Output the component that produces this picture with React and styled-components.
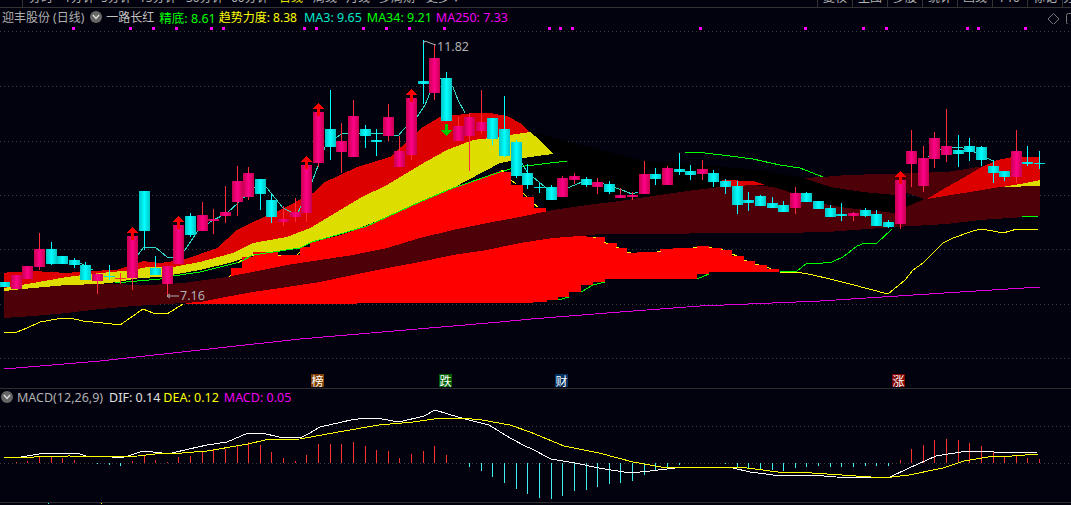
import React from 'react';
import styled, { createGlobalStyle } from 'styled-components';

const FONT = '"Noto Sans", "Noto Sans CJK SC", sans-serif';

const GlobalStyle = createGlobalStyle`
    html, body {
        margin: 0;
        padding: 0;
        background: #02020e;
    }
`;

// [bodyTop, bodyBottom, wickTop, wickBottom, colour, mark]
const P = 'p';
const C = 'c';
const candles = [
    [282, 287, 282, 287, C], [275, 289, 275, 289, P], [266, 279, 266, 279, P], [249, 267, 233, 270, P],
    [249, 264, 242, 265, C], [256, 264, 256, 264, C], [260, 265, 258, 268, C], [265, 280, 262, 280, C],
    [274, 281, 273, 294, P], [276, 277, 265, 280, C], [278, 279, 273, 284, 'x'], [236, 278, 236, 290, P, 'up'],
    [191, 231, 191, 250, C], [268, 275, 256, 275, C], [266, 284, 266, 296, P], [225, 264, 225, 264, P, 'up'],
    [216, 235, 213, 237, C], [215, 231, 202, 231, P], [219, 221, 209, 234, P], [212, 216, 186, 223, P],
    [181, 202, 166, 216, P], [173, 197, 167, 200, P], [179, 194, 179, 210, C], [200, 217, 194, 223, C],
    [219, 222, 206, 226, P], [212, 217, 198, 222, P], [165, 213, 165, 222, P, 'up'], [112, 163, 112, 167, P, 'up'],
    [129, 147, 90, 160, C], [141, 152, 123, 173, P], [116, 157, 100, 157, P], [129, 136, 125, 148, C],
    [140, 142, 129, 156, C], [117, 136, 104, 141, P], [151, 167, 136, 167, P], [98, 155, 98, 160, P, 'up'],
    [81, 84, 40, 104, C], [58, 93, 45, 100, P], [78, 121, 72, 121, C, 'down'], [126, 141, 117, 141, P],
    [117, 136, 113, 171, P], [122, 131, 90, 134, P], [118, 139, 118, 145, C], [129, 156, 96, 157, C],
    [142, 176, 140, 178, C], [173, 185, 164, 189, C], [187, 188, 183, 193, C], [187, 200, 185, 200, C],
    [178, 197, 176, 197, P], [176, 180, 173, 184, P], [179, 185, 177, 187, C], [182, 187, 178, 194, P],
    [184, 192, 181, 194, C], [195, 198, 188, 198, P], [195, 197, 192, 200, P], [174, 194, 161, 194, P],
    [174, 179, 168, 185, C], [168, 185, 166, 185, P], [169, 172, 153, 175, C], [171, 175, 165, 180, C],
    [169, 174, 160, 180, P], [173, 182, 170, 187, C], [181, 187, 179, 194, C], [186, 205, 181, 214, C],
    [200, 203, 192, 211, C], [196, 206, 195, 206, C], [203, 208, 197, 208, C], [205, 212, 201, 212, C],
    [193, 208, 187, 214, P], [193, 202, 192, 202, C], [201, 209, 201, 209, C], [208, 217, 205, 217, C],
    [214, 216, 203, 221, C], [213, 216, 212, 221, P], [210, 216, 208, 217, C], [214, 226, 210, 226, C],
    [222, 227, 220, 228, C], [180, 224, 180, 229, P, 'up'], [151, 164, 130, 187, P], [158, 186, 146, 192, P],
    [138, 159, 132, 168, P], [146, 155, 109, 162, P], [150, 154, 135, 167, C], [146, 152, 138, 161, C],
    [147, 160, 146, 166, C], [166, 173, 160, 183, C], [171, 177, 171, 181, C], [151, 177, 130, 183, P],
    [162, 164, 146, 166, C], [163, 164, 151, 169, C],
];

const candleX = (i) => 4 + 11.63 * i;

const periods = [
    ['分时', 35], ['1分钟', 37], ['5分钟', 38], ['15分钟', 47], ['30分钟', 45], ['60分钟', 48],
    ['日线', 34], ['周线', 33], ['月线', 33], ['多周期', 47], ['更多 ▾', 40],
];
const tools = ['复权', '主图', '多股', '统计', '画线', 'F10', '标记', '分'];

const signalX = [74, 131, 154, 177, 212, 224, 305, 317, 364, 387, 410, 445, 550, 561, 573, 701, 806, 864, 887, 968, 979, 1026];
const gridY = [31, 86, 141, 195, 249, 304, 358];

const pts = (list) => list.map((p) => p.join(',')).join(' ');

// horizontal then vertical, like the staircase the terminal draws
const stairs = (list) => {
    const out = [];
    list.forEach((p, i) => {
        out.push(p);
        if (i < list.length - 1) out.push([list[i + 1][0], p[1]]);
    });
    return out;
};

const redTop = [
    [4, 273], [10, 272], [33, 271], [67, 273], [87, 271], [117, 270], [143, 261], [160, 263], [183, 260], [217, 248],
    [237, 230], [253, 222], [280, 210], [313, 193], [323, 183], [357, 167], [390, 157], [423, 127], [440, 117],
    [473, 113], [490, 113], [507, 116], [520, 123], [530, 132],
];
const yellowTop = [
    [4, 288], [33, 283], [67, 277], [100, 273], [133, 270], [147, 267], [173, 267], [200, 262], [233, 253], [253, 243],
    [287, 237], [310, 228], [337, 212], [360, 198], [387, 185], [420, 165], [447, 150], [473, 140], [490, 138], [530, 132],
];
const yellowBottom = [
    [4, 292], [33, 289], [67, 286], [100, 284], [117, 282], [140, 278], [160, 277], [183, 273], [200, 270], [233, 262],
    [253, 255], [300, 248], [312, 242], [337, 235], [367, 225], [387, 217], [420, 202], [453, 188], [500, 163],
    [530, 157], [553, 154], [540, 140],
];
const bigRedTop = [
    [184, 304], [231, 292], [231, 268], [242, 268], [242, 257], [253, 257], [253, 252], [278, 252], [278, 255], [300, 255],
    [300, 247], [310, 247], [310, 243], [337, 236], [367, 226], [387, 217], [420, 202], [453, 188], [500, 171], [500, 172],
    [511, 172], [511, 185], [523, 185], [523, 197], [534, 197], [534, 208], [546, 208], [546, 222], [580, 236],
    ...stairs([[593, 237], [605, 243], [617, 248], [627, 253], [637, 252], [660, 249], [673, 248], [697, 246], [709, 248],
        [722, 250], [732, 256], [744, 261], [755, 265], [767, 269], [779, 272]]),
];
const bigRedBottom = [
    ...stairs([[723, 272], [709, 274], [697, 279], [605, 282], [593, 285], [581, 292], [569, 297], [558, 300], [547, 302], [533, 303]]),
    [184, 304],
];
const maroonTop = [
    [4, 291], [33, 288], [67, 285], [100, 284], [150, 285], [183, 283], [220, 278], [253, 272], [287, 265], [320, 260],
    [353, 255], [387, 248], [420, 238], [453, 230], [487, 223], [520, 217], [553, 210], [587, 205], [620, 201], [653, 196],
    [687, 191], [720, 187], [753, 185], [773, 187], [787, 191], [813, 202], [847, 208], [895, 213], [906, 207], [927, 198],
    [963, 192], [997, 187], [1040, 186],
];
const maroonBottom = [
    [1040, 216], [980, 220], [947, 224], [895, 227], [827, 232], [780, 233], [600, 234], [580, 236], [553, 238], [520, 243],
    [487, 250], [453, 255], [420, 262], [387, 268], [353, 275], [320, 282], [287, 287], [253, 292], [220, 298], [200, 302],
    [167, 304], [133, 306], [100, 309], [67, 313], [33, 316], [4, 318],
];
const upperCloud = [
    [803, 178], [823, 177], [847, 175], [880, 174], [947, 172], [985, 166], [1000, 190], [927, 200], [906, 193], [895, 195],
    [863, 192], [830, 187],
];
const rightRed = [
    [927, 199], [947, 187], [963, 178], [980, 168], [997, 160], [1013, 157], [1040, 157], [1040, 186], [1000, 187],
];
const rightYellow = [[1002, 187], [1020, 184], [1040, 180], [1040, 186]];
const redSliver = [[722, 180], [753, 181], [765, 185], [753, 185], [722, 187]];
const blackCloud = [
    [530, 132], [640, 160], [760, 170], [803, 178], [895, 195], [927, 199], [895, 213], [847, 208], [813, 202], [780, 191],
    [720, 187], [653, 196], [587, 205], [550, 210], [546, 208], [500, 163],
];

const greenLines = [
    [[115, 283], [160, 279], [173, 276], [200, 272], [240, 262], [253, 255], [300, 248], [312, 242], [337, 235], [367, 226],
        [387, 217], [420, 202], [453, 188], [500, 172], [517, 167], [567, 161]],
    [[685, 152], [705, 153], [730, 156], [753, 159], [780, 165], [800, 168], [823, 177]],
    [[780, 272], [797, 271], [807, 263], [823, 263], [832, 262], [843, 257], [857, 246], [865, 243], [877, 243], [892, 229]],
    [[1022, 216], [1038, 216]],
    [[558, 300], [569, 297]], [[581, 292], [593, 285], [605, 282]], [[697, 279], [709, 274]],
];
const yellowLines = [
    [[4, 333], [17, 332], [27, 328], [40, 322], [57, 319], [70, 318], [83, 321], [103, 323], [120, 325], [143, 309], [153, 313],
        [167, 314], [183, 304]],
    [[229, 277], [231, 275]], [[238, 263], [242, 260]], [[252, 255], [254, 256]], [[278, 255], [281, 255]], [[297, 255], [300, 252]],
    [[501, 170], [504, 172]], [[511, 180], [516, 184]], [[523, 193], [527, 197]], [[534, 204], [538, 207]],
    [[593, 237], [596, 238]], [[604, 242], [608, 244]], [[616, 247], [619, 248]], [[627, 252], [631, 253]], [[657, 251], [661, 251]],
    [[693, 247], [697, 247]], [[709, 247], [712, 248]], [[721, 249], [723, 250]], [[732, 254], [737, 256]], [[744, 260], [747, 261]],
    [[755, 264], [759, 265]], [[767, 267], [771, 269]],
    [[780, 273], [797, 272], [813, 275], [830, 279], [850, 284], [888, 294], [905, 280], [913, 270], [923, 263], [943, 243], [953, 238],
        [970, 232], [980, 229], [993, 231], [1003, 233], [1017, 229], [1038, 229]],
];
const tealLines = [
    [[138, 255], [143, 248], [155, 247], [167, 257], [173, 257], [185, 250], [197, 232], [210, 222], [227, 213], [238, 203], [255, 187],
        [267, 188], [283, 208], [297, 215], [312, 182], [325, 147], [337, 137], [343, 133], [358, 133], [383, 134], [398, 136], [403, 130],
        [417, 117], [425, 105], [430, 93], [440, 78], [453, 87], [458, 100], [465, 113]],
    [[522, 163], [527, 172], [545, 187], [570, 187], [582, 182], [598, 182], [607, 185], [622, 190], [632, 194], [638, 192]],
    [[928, 157], [940, 150], [953, 147], [963, 148], [977, 153], [987, 158], [993, 161]],
    [[80, 263], [93, 270]],
];

const difLine = [
    [4, 458], [21, 457], [45, 453], [77, 453], [86, 456], [103, 456], [121, 458], [131, 455], [143, 451], [162, 453], [172, 453], [189, 449],
    [207, 445], [227, 442], [248, 433], [262, 433], [279, 437], [300, 438], [310, 433], [320, 427], [351, 420], [365, 418], [382, 419],
    [399, 422], [424, 416], [435, 410], [448, 414], [465, 419], [489, 425], [510, 438], [527, 447], [530, 448], [551, 459], [575, 463],
    [599, 468], [630, 473], [650, 471], [675, 468], [702, 467], [733, 468], [750, 472], [781, 476], [812, 475], [836, 477], [888, 478],
    [909, 468], [936, 456], [967, 451], [985, 451], [1002, 453], [1038, 452],
];
const deaLine = [
    [4, 458], [34, 457], [69, 456], [103, 457], [138, 456], [155, 454], [182, 453], [207, 451], [248, 444], [265, 440], [300, 439], [344, 431],
    [379, 425], [413, 422], [441, 418], [461, 418], [482, 420], [510, 425], [530, 432], [564, 446], [599, 453], [633, 462], [661, 467],
    [719, 467], [747, 468], [778, 472], [812, 473], [871, 477], [892, 477], [909, 475], [943, 468], [964, 461], [988, 457], [1012, 456], [1038, 454],
];
const macdBars = {
    1: 1, 2: 2, 3: 6, 4: 6, 5: 5, 6: 3, 8: -1, 9: -2, 10: -3, 11: 2, 12: 8, 13: 3, 14: 1, 15: 6, 16: 7, 17: 11, 18: 13, 19: 14, 20: 18,
    21: 21, 22: 18, 23: 11, 24: 5, 25: 2, 26: 8, 27: 19, 28: 19, 29: 19, 30: 21, 31: 17, 32: 13, 33: 12, 34: 5, 35: 9, 36: 12, 37: 17,
    38: 8, 40: -4, 41: -8, 42: -14, 43: -20, 44: -26, 45: -31, 46: -35, 47: -36, 48: -33, 49: -28, 50: -27, 51: -24, 52: -21, 53: -20,
    54: -18, 55: -12, 56: -8, 57: -4, 58: -2, 62: -1, 63: -4, 64: -5, 65: -7, 66: -7, 67: -8, 68: -5, 69: -4, 70: -3, 71: -4, 72: -4,
    73: -4, 74: -3, 75: -3, 76: -3, 77: 3, 78: 14, 79: 18, 80: 23, 81: 24, 82: 23, 83: 20, 84: 17, 85: 11, 86: 7, 87: 8, 88: 5, 89: 4,
};

const Page = styled.div`
    width: 1071px;
    height: 505px;
    overflow: hidden;
    display: flex;
    flex-direction: column;
    background: #02020e;
    font-family: ${FONT};
`;

const TopBar = styled.div`
    height: 7px;
    flex: none;
    display: flex;
    overflow: hidden;
    border-bottom: 1px solid #333;
`;

const PeriodTabs = styled.div`
    margin-left: 22px;
    padding-left: 6px;
    display: flex;
    border-left: 1px solid #333;
`;

const PeriodTab = styled.div`
    width: ${(p) => p.$w}px;
    flex: none;
    font-size: 12px;
    line-height: 14px;
    margin-top: -9px;
    white-space: nowrap;
    color: ${(p) => (p.$active ? '#e8e000' : '#b4b4b4')};
`;

const ToolButtons = styled.div`
    margin-left: auto;
    display: flex;
`;

const ToolButton = styled.div`
    width: ${(p) => p.$w}px;
    box-sizing: border-box;
    flex: none;
    overflow: hidden;
    border-left: 1px solid #333;
    text-align: center;
    font-size: 12px;
    line-height: 14px;
    color: #b4b4b4;
    > span {
        display: block;
        margin-top: -9px;
    }
`;

const Legend = styled.div`
    height: ${(p) => p.$h}px;
    flex: none;
    display: flex;
    align-items: center;
    font-size: 12.5px;
    white-space: nowrap;
    position: relative;
`;

const LegendItem = styled.span`
    color: ${(p) => p.$color};
    margin-left: ${(p) => p.$gap}px;
    font-size: ${(p) => p.$size || 12.5}px;
`;

const CollapseDot = styled.span`
    width: 12px;
    height: 12px;
    flex: none;
    margin-left: ${(p) => p.$gap}px;
    border-radius: 50%;
    background: #666;
    display: flex;
    align-items: center;
    justify-content: center;
`;

const CornerIcons = styled.div`
    position: absolute;
    right: 0;
    top: 4px;
    width: 23px;
    height: 12px;
    overflow: hidden;
`;

const ChartPane = styled.div`
    position: relative;
    height: 362px;
    flex: none;
`;

const ChartSvg = styled.svg`
    display: block;
    width: 1071px;
    height: ${(p) => p.$h}px;
`;

const PriceTag = styled.span`
    position: absolute;
    left: ${(p) => p.$x}px;
    top: ${(p) => p.$y}px;
    font-size: 12.5px;
    line-height: 14px;
    color: #b0b0b0;
`;

const EventBadge = styled.span`
    position: absolute;
    left: ${(p) => p.$x}px;
    top: 348px;
    width: 13px;
    height: 13px;
    background: ${(p) => p.$bg};
    color: #fff;
    font-family: "Noto Sans CJK SC", sans-serif;
    font-size: 12px;
    line-height: 13px;
    text-align: center;
`;

const MacdPane = styled.div`
    height: 113px;
    flex: none;
    border-top: 1px solid #2e2e2e;
    border-bottom: 1px solid #2e2e2e;
`;

const Footer = styled.div`
    height: 2px;
    flex: none;
    display: flex;
`;

const FooterTick = styled.span`
    width: 1px;
    height: 1px;
    margin-left: ${(p) => p.$gap}px;
    background: ${(p) => p.$color};
`;

const Chevron = () => (
    <svg width="8" height="6" viewBox="0 0 8 6">
        <path d="M1 1 L4 4.5 L7 1" fill="none" stroke="#ddd" strokeWidth="1.4" />
    </svg>
);

const Lines = ({ lines, color }) => lines.map((line, i) => (
    <polyline key={i} points={pts(line)} fill="none" stroke={color} strokeWidth="1" shapeRendering="crispEdges" />
));

const Candle = ({ c, i }) => {
    const [top, bottom, wickTop, wickBottom, kind, mark] = c;
    const x = candleX(i);
    const cx = Math.round(x);
    const wick = kind === C ? '#00ffff' : '#ff2a3a';
    return (
        <g shapeRendering="crispEdges">
            <rect x={cx} y={wickTop} width="1.2" height={wickBottom - wickTop} fill={wick} />
            {kind === 'x' ? (
                <rect x={cx - 5} y={top} width="11" height="1" fill={wick} />
            ) : (
                <rect x={cx - 5} y={top} width="11" height={Math.max(bottom - top, 1)} fill={`url(#${kind === C ? 'cyanBody' : 'pinkBody'})`} />
            )}
            {mark === 'up' && (
                <path d={`M${cx - 5} ${top - 3} L${cx + 0.5} ${top - 9} L${cx + 6} ${top - 3} L${cx + 2} ${top - 3} L${cx + 2} ${top + 4} L${cx - 1} ${top + 4} L${cx - 1} ${top - 3} Z`} fill="#ff0000" />
            )}
            {mark === 'down' && (
                <path d={`M${cx - 5} ${bottom + 9} L${cx + 0.5} ${bottom + 15} L${cx + 6} ${bottom + 9} L${cx + 2} ${bottom + 9} L${cx + 2} ${bottom + 3} L${cx - 1} ${bottom + 3} L${cx - 1} ${bottom + 9} Z`} fill="#00c800" />
            )}
        </g>
    );
};

const MainChart = () => (
    <ChartSvg $h={362} viewBox="0 26 1071 362">
        <defs>
            <linearGradient id="pinkBody">
                <stop offset="0" stopColor="#c80050" />
                <stop offset="0.5" stopColor="#ff0088" />
                <stop offset="1" stopColor="#c80050" />
            </linearGradient>
            <linearGradient id="cyanBody">
                <stop offset="0" stopColor="#00c4c4" />
                <stop offset="0.5" stopColor="#00ffff" />
                <stop offset="1" stopColor="#00c4c4" />
            </linearGradient>
        </defs>
        {gridY.map((y) => (
            <line key={y} x1="0" x2="1071" y1={y + 0.5} y2={y + 0.5} stroke="#3c3c3c" strokeDasharray="1 3" />
        ))}
        {signalX.map((x) => (
            <rect key={x} x={x - 2} y="27" width="3" height="3" fill="#ff00ff" />
        ))}
        <polyline points={pts([[4, 369], [100, 361], [300, 339], [500, 322], [531, 319], [620, 312], [700, 306], [820, 301], [960, 292], [1040, 287]])} fill="none" stroke="#e000e0" shapeRendering="crispEdges" />
        <g shapeRendering="crispEdges">
            <polygon points={pts(blackCloud)} fill="#000" />
            <polygon points={pts([...redTop, ...[...yellowTop].reverse()])} fill="#dd0000" />
            <polygon points={pts([...yellowTop, ...[...yellowBottom].reverse()])} fill="#dddd00" />
            <polygon points={pts([...bigRedTop, ...bigRedBottom])} fill="#ff0000" />
            <polygon points={pts([...maroonTop, ...maroonBottom])} fill="#4e0008" />
            <polygon points={pts(upperCloud)} fill="#4e0008" />
            <polygon points={pts(redSliver)} fill="#dd0000" />
            <polygon points={pts(rightRed)} fill="#dd0000" />
            <polygon points={pts(rightYellow)} fill="#dddd00" />
        </g>
        <Lines lines={greenLines} color="#00ff00" />
        <Lines lines={yellowLines} color="#ffff00" />
        <Lines lines={tealLines} color="#30d8c8" />
        {candles.map((c, i) => <Candle key={i} c={c} i={i} />)}
        <polyline points="423,44 425,41 430,43 436,45" fill="none" stroke="#b0b0b0" />
        <path d="M167 296 H179 M167 296 L170 294 M167 296 L170 298" fill="none" stroke="#b0b0b0" />
    </ChartSvg>
);

const MacdChart = () => (
    <ChartSvg $h={97} viewBox="0 405 1071 97">
        <line x1="0" x2="1071" y1="426.5" y2="426.5" stroke="#3c3c3c" strokeDasharray="1 3" />
        <line x1="0" x2="1071" y1="463.5" y2="463.5" stroke="#3c3c3c" strokeDasharray="1 3" />
        <g shapeRendering="crispEdges">
            {Object.entries(macdBars).map(([i, v]) => {
                const x = Math.round(candleX(Number(i)));
                return <rect key={i} x={x} y={v > 0 ? 463 - v : 463} width="1" height={Math.abs(v)} fill={v > 0 ? '#ff3030' : '#40f0f0'} />;
            })}
        </g>
        <Lines lines={[difLine]} color="#ffffff" />
        <Lines lines={[deaLine]} color="#ffff00" />
    </ChartSvg>
);

const App = () => (
    <>
        <GlobalStyle />
        <Page>
            <TopBar>
                <PeriodTabs>
                    {periods.map(([label, w]) => (
                        <PeriodTab key={label} $w={w} $active={label === '日线'}>{label}</PeriodTab>
                    ))}
                </PeriodTabs>
                <ToolButtons>
                    {tools.map((label, i) => (
                        <ToolButton key={label} $w={i === 7 ? 9 : 35}><span>{label}</span></ToolButton>
                    ))}
                </ToolButtons>
            </TopBar>
            <Legend $h={18}>
                <LegendItem $gap={2} $size={12} $color="#b0b0b0">迎丰股份 (日线)</LegendItem>
                <CollapseDot $gap={6}><Chevron /></CollapseDot>
                <LegendItem $gap={4} $size={12} $color="#c0c0c0">一路长红</LegendItem>
                <LegendItem $gap={5} $color="#00ff00">精底: 8.61</LegendItem>
                <LegendItem $gap={3} $size={12} $color="#ffff00">趋势力度: 8.38</LegendItem>
                <LegendItem $gap={7} $color="#00e8c8">MA3: 9.65</LegendItem>
                <LegendItem $gap={5} $color="#00ff00">MA34: 9.21</LegendItem>
                <LegendItem $gap={4} $color="#f000f0">MA250: 7.33</LegendItem>
                <CornerIcons>
                    <svg width="23" height="12" viewBox="0 0 23 12">
                        <path d="M5.5 0.5 L11 6 L5.5 11.5 L0 6 Z" fill="none" stroke="#777" />
                        <rect x="18.5" y="0.5" width="10" height="11" rx="2" fill="none" stroke="#777" />
                    </svg>
                </CornerIcons>
            </Legend>
            <ChartPane>
                <MainChart />
                <PriceTag $x={437} $y={14}>11.82</PriceTag>
                <PriceTag $x={180} $y={263}>7.16</PriceTag>
                <EventBadge $x={311} $bg="#804000">榜</EventBadge>
                <EventBadge $x={439} $bg="#006000">跌</EventBadge>
                <EventBadge $x={555} $bg="#003060">财</EventBadge>
                <EventBadge $x={892} $bg="#800000">涨</EventBadge>
            </ChartPane>
            <MacdPane>
                <Legend $h={16}>
                    <CollapseDot $gap={1}><Chevron /></CollapseDot>
                    <LegendItem $gap={4} $color="#b0b0b0">MACD(12,26,9)</LegendItem>
                    <LegendItem $gap={6} $color="#e0e0e0">DIF: 0.14</LegendItem>
                    <LegendItem $gap={3} $color="#ffff00">DEA: 0.12</LegendItem>
                    <LegendItem $gap={5} $color="#f000f0">MACD: 0.05</LegendItem>
                </Legend>
                <MacdChart />
            </MacdPane>
            <Footer>
                <FooterTick $gap={48} $color="#40f0f0" />
                <FooterTick $gap={52} $color="#ffff00" />
            </Footer>
        </Page>
    </>
);

export default App;
